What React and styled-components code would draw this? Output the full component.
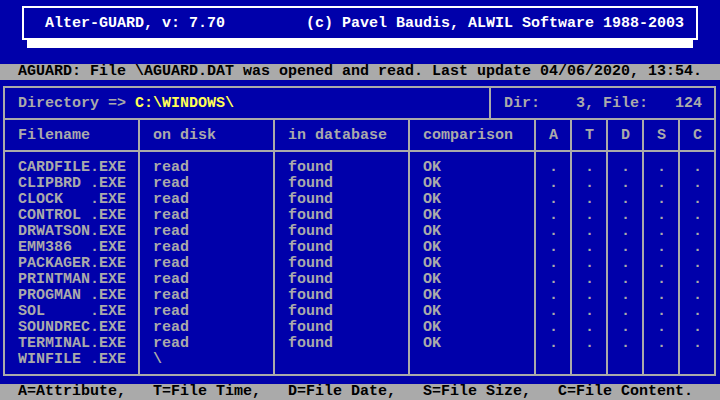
import React from "react";
import styled, { createGlobalStyle } from "styled-components";

const BLUE = "#0000AA";
const GRAY = "#AAAAAA";
const WHITE = "#FFFFFF";
const YELLOW = "#FFFF55";

const Global = createGlobalStyle`
  html, body { margin: 0; padding: 0; background: ${BLUE}; }
  body {
    font-family: "Liberation Mono", "DejaVu Sans Mono", monospace;
    font-size: 15px;
    line-height: 16px;
    font-weight: bold;
  }
`;

const Screen = styled.div`
  width: 720px;
  height: 400px;
  background: ${BLUE};
  color: ${GRAY};
  display: flex;
  flex-direction: column;
  overflow: hidden;
  white-space: pre;
`;

const TitleArea = styled.div`
  height: 64px;
  padding-top: 6px;
  box-sizing: border-box;
  display: flex;
  flex-direction: column;
`;

const TitleBox = styled.div`
  margin-left: 22px;
  width: 676px;
  height: 34px;
  box-sizing: border-box;
  border: 2px solid ${WHITE};
  padding: 8px 12px 0 21px;
  display: flex;
  justify-content: space-between;
  color: ${WHITE};
`;

const Shadow = styled.div`
  margin-left: 27px;
  width: 666px;
  height: 8px;
  background: ${WHITE};
`;

const StatusBar = styled.div`
  height: 16px;
  background: ${GRAY};
  color: #000;
  padding-left: 18px;
  flex: none;
`;

const Panel = styled.div`
  margin: 6px 0 0 3px;
  width: 713px;
  height: 290px;
  box-sizing: border-box;
  border: 2px solid ${GRAY};
  background: ${GRAY};
  display: grid;
  grid-template-columns: 133px 133px 133px 124px 34px 34px 34px 34px 34px;
  grid-template-rows: 30px 30px 222px;
  gap: 2px;
`;

const DirRow = styled.div`
  grid-column: 1 / -1;
  display: flex;
  gap: 2px;
`;

const Cell = styled.div`
  background: ${BLUE};
  padding: 8px 0 0 13px;
  box-sizing: border-box;
  width: ${(p) => (p.$w ? `${p.$w}px` : "auto")};
  flex: ${(p) => (p.$w ? "none" : "1")};
`;

const Yellow = styled.span`
  color: ${YELLOW};
`;

const Line = styled.div`
  height: 16px;
`;

const BottomBar = styled(StatusBar)`
  margin-top: 8px;
`;

const files = [
  "CARDFILE.EXE",
  "CLIPBRD .EXE",
  "CLOCK   .EXE",
  "CONTROL .EXE",
  "DRWATSON.EXE",
  "EMM386  .EXE",
  "PACKAGER.EXE",
  "PRINTMAN.EXE",
  "PROGMAN .EXE",
  "SOL     .EXE",
  "SOUNDREC.EXE",
  "TERMINAL.EXE",
  "WINFILE .EXE",
];

const done = files.length - 1;

const headers = ["Filename", "on disk", "in database", "comparison", "A", "T", "D", "S", "C"];

function column(i) {
  if (i === 0) return files;
  if (i === 1) return [...Array(done).fill("read"), "\\"];
  if (i === 2) return Array(done).fill("found");
  if (i === 3) return Array(done).fill("OK");
  return Array(done).fill(".");
}

export default function App() {
  return (
    <>
      <Global />
      <Screen>
        <TitleArea>
          <TitleBox>
            <span>Alter-GUARD, v: 7.70</span>
            <span>(c) Pavel Baudis, ALWIL Software 1988-2003</span>
          </TitleBox>
          <Shadow />
        </TitleArea>
        <StatusBar>
          AGUARD: File \AGUARD.DAT was opened and read. Last update 04/06/2020, 13:54.
        </StatusBar>
        <Panel>
          <DirRow>
            <Cell $w={484}>
              Directory =&gt; <Yellow>C:\WINDOWS\</Yellow>
            </Cell>
            <Cell>{"Dir:    3, File:   124"}</Cell>
          </DirRow>
          {headers.map((h) => (
            <Cell key={h}>{h}</Cell>
          ))}
          {headers.map((h, i) => (
            <Cell key={"c" + h}>
              {column(i).map((t, j) => (
                <Line key={j}>{t}</Line>
              ))}
            </Cell>
          ))}
        </Panel>
        <BottomBar>
          {"A=Attribute,   T=File Time,   D=File Date,   S=File Size,   C=File Content."}
        </BottomBar>
      </Screen>
    </>
  );
}
